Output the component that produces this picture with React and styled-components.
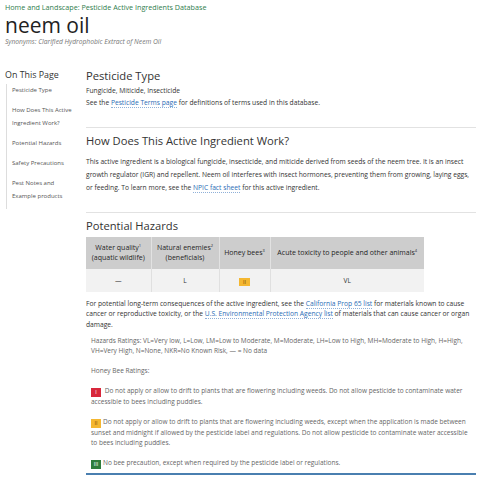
import React from 'react';
import styled, { createGlobalStyle } from 'styled-components';

const GlobalStyle = createGlobalStyle`
  body {
    margin: 0;
    background: #fff;
    font-family: "Open Sans", "Liberation Sans", sans-serif;
    color: #333;
  }
`;

const Page = styled.div`
  width: 480px;
  height: 480px;
  overflow: hidden;
  padding: 0 4px 0 5px;
  box-sizing: border-box;
`;

const Breadcrumb = styled.div`
  padding-top: 2px;
  font-size: 7.2px;
  line-height: 10px;
  color: #2f7d4d;
`;

const Title = styled.h1`
  margin: 0;
  font-size: 21px;
  line-height: 26px;
  font-weight: 400;
  color: #222;
`;

const Synonyms = styled.div`
  font-size: 6.7px;
  line-height: 8px;
  font-style: italic;
  color: #777;
`;

const Layout = styled.div`
  display: flex;
  margin-top: 23px;
`;

const Sidebar = styled.nav`
  width: 81px;
  flex-shrink: 0;
`;

const SideTitle = styled.div`
  font-size: 8.9px;
  line-height: 12px;
  color: #333;
`;

const SideList = styled.ul`
  list-style: none;
  margin: 3px 0 0 1px;
  padding: 0 0 6px 5px;
  border-left: 1px solid #ddd;
  display: flex;
  flex-direction: column;
  gap: 7px;
`;

const SideItem = styled.li`
  width: 63px;
  font-size: 6px;
  line-height: 13px;
  color: #555;
`;

const Main = styled.main`
  flex: 1;
`;

const Section = styled.section`
  padding-bottom: ${p => p.$pad ?? 18}px;
  border-bottom: ${p => (p.$last ? 'none' : '1px solid #e2e2e2')};
  margin-bottom: 6px;
`;

const Heading = styled.h2`
  margin: 0 0 ${p => p.$gap || 2}px;
  font-size: 11.2px;
  line-height: 14px;
  font-weight: 400;
  color: #333;
`;

const Text = styled.p`
  margin: 0;
  font-size: 6.7px;
  line-height: ${p => p.$lh || 12}px;
  color: #333;
`;

const Link = styled.a`
  color: #2a6cb5;
  text-decoration: none;
  border-bottom: 1px dotted #8fb0d8;
`;

const Table = styled.table`
  width: 338px;
  table-layout: fixed;
  border-collapse: collapse;
  text-align: center;
  margin-bottom: 7px;
`;

const Th = styled.th`
  box-sizing: border-box;
  background: #cdcdcd;
  font-size: 7px;
  font-weight: 400;
  color: #1f1f1f;
  line-height: 10px;
  height: 32px;
  padding: 0 2px;
  white-space: nowrap;
  border-right: 1px solid #e2e2e2;
  width: ${p => (p.$w ? `${p.$w}px` : 'auto')};
  &:last-child {
    border-right: none;
  }
`;

const Td = styled.td`
  background: #f2f2f2;
  height: 21px;
  font-size: 6.6px;
  color: #333;
  border-right: 1px solid #e0e0e0;
  &:last-child {
    border-right: none;
  }
`;

const Sup = styled.sup`
  font-size: 4px;
  vertical-align: 3px;
  line-height: 0;
`;

const Ratings = styled.div`
  margin-top: 0;
  padding: 6px 5px 4px;
  border-bottom: 2px solid #4a7fb0;
  display: flex;
  flex-direction: column;
  gap: 10px;
`;

const Note = styled.p`
  margin: 0;
  font-size: 6.5px;
  line-height: 10px;
  color: #666;
`;

const badgeColors = {
  I: { bg: '#d8283c', fg: '#fff' },
  II: { bg: '#f4b731', fg: '#7a4a00' },
  III: { bg: '#2f7d3c', fg: '#fff' },
};

const Badge = styled.span`
  display: inline-block;
  min-width: ${p => (p.$small ? 11 : 10)}px;
  height: ${p => (p.$small ? 8 : 9)}px;
  padding: 0 1px;
  margin-right: ${p => (p.$small ? 0 : 2)}px;
  box-sizing: border-box;
  background: ${p => badgeColors[p.$level].bg};
  color: ${p => badgeColors[p.$level].fg};
  font-size: 5.5px;
  line-height: ${p => (p.$small ? 8 : 9)}px;
  text-align: center;
  vertical-align: -1px;
`;

const navItems = [
  'Pesticide Type',
  'How Does This Active Ingredient Work?',
  'Potential Hazards',
  'Safety Precautions',
  'Pest Notes and Example products',
];

export default function App() {
  return (
    <Page>
      <GlobalStyle />
      <Breadcrumb>Home and Landscape: Pesticide Active Ingredients Database</Breadcrumb>
      <Title>neem oil</Title>
      <Synonyms>Synonyms: Clarified Hydrophobic Extract of Neem Oil</Synonyms>
      <Layout>
        <Sidebar>
          <SideTitle>On This Page</SideTitle>
          <SideList>
            {navItems.map(item => (
              <SideItem key={item}>{item}</SideItem>
            ))}
          </SideList>
        </Sidebar>
        <Main>
          <Section>
            <Heading>Pesticide Type</Heading>
            <Text>Fungicide, Miticide, Insecticide</Text>
            <Text>
              See the <Link>Pesticide Terms page</Link> for definitions of terms used in this database.
            </Text>
          </Section>
          <Section>
            <Heading $gap={7}>How Does This Active Ingredient Work?</Heading>
            <Text $lh={13}>
              This active ingredient is a biological fungicide, insecticide, and miticide derived from seeds of the neem tree. It is an insect
              growth regulator (IGR) and repellent. Neem oil interferes with insect hormones, preventing them from growing, laying eggs,
              or feeding. To learn more, see the <Link>NPIC fact sheet</Link> for this active ingredient.
            </Text>
          </Section>
          <Section $last $pad={0}>
            <Heading $gap={4}>Potential Hazards</Heading>
            <Table>
              <thead>
                <tr>
                  <Th $w={65}>
                    Water quality<Sup>1</Sup>
                    <br />
                    (aquatic wildlife)
                  </Th>
                  <Th $w={68}>
                    Natural enemies<Sup>2</Sup>
                    <br />
                    (beneficials)
                  </Th>
                  <Th $w={51}>
                    Honey bees<Sup>3</Sup>
                  </Th>
                  <Th>
                    Acute toxicity to people and other animals<Sup>4</Sup>
                  </Th>
                </tr>
              </thead>
              <tbody>
                <tr>
                  <Td>—</Td>
                  <Td>L</Td>
                  <Td>
                    <Badge $level="II" $small>II</Badge>
                  </Td>
                  <Td>VL</Td>
                </tr>
              </tbody>
            </Table>
            <Text $lh={10.4}>
              For potential long-term consequences of the active ingredient, see the <Link>California Prop 65 list</Link> for materials known to cause
              cancer or reproductive toxicity, or the <Link>U.S. Environmental Protection Agency list</Link> of materials that can cause cancer or organ
              damage.
            </Text>
            <Ratings>
              <Note>
                Hazards Ratings: VL=Very low, L=Low, LM=Low to Moderate, M=Moderate, LH=Low to High, MH=Moderate to High, H=High,
                VH=Very High, N=None, NKR=No Known Risk, — = No data
              </Note>
              <Note>Honey Bee Ratings:</Note>
              <Note>
                <Badge $level="I">I</Badge> Do not apply or allow to drift to plants that are flowering including weeds. Do not allow pesticide to contaminate water
                accessible to bees including puddles.
              </Note>
              <Note>
                <Badge $level="II">II</Badge>Do not apply or allow to drift to plants that are flowering including weeds, except when the application is made between
                sunset and midnight if allowed by the pesticide label and regulations. Do not allow pesticide to contaminate water accessible
                to bees including puddles.
              </Note>
              <Note>
                <Badge $level="III">III</Badge>No bee precaution, except when required by the pesticide label or regulations.
              </Note>
            </Ratings>
          </Section>
        </Main>
      </Layout>
    </Page>
  );
}
